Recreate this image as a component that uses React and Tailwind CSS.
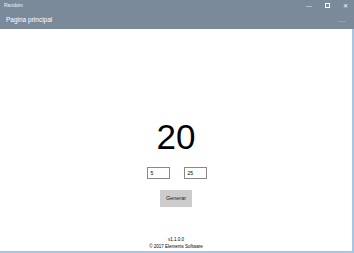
export default function App() {
  return (
    <div className="w-[354px] h-[253px] flex flex-col bg-white font-['Liberation_Sans',sans-serif] overflow-hidden">
      {/* barra de titulo */}
      <div className="bg-[#7b8a9b] text-white">
        <div className="h-[11px] flex items-center justify-between pl-[4px]">
          <span className="text-[5px] leading-none opacity-90">Random</span>
          <div className="flex items-center h-full text-[6px] leading-none">
            <span className="w-[18px] text-center">&#8212;</span>
            <span className="w-[18px] flex justify-center">
              <span className="w-[5px] h-[5px] border border-white" />
            </span>
            <span className="w-[18px] text-center">&#10005;</span>
          </div>
        </div>
        <div className="h-[18px] flex items-center justify-between pl-[6px] pr-[8px]">
          <span className="text-[6.5px] leading-none pt-[1px]">Pagina principal</span>
          <span className="text-[6px] leading-none tracking-[1px]">...</span>
        </div>
      </div>

      {/* contenido */}
      <div className="flex-1 flex flex-col items-center border-r-2 border-b-2 border-[#a8c6e4]">
        <div className="mt-[90px] text-[35px] leading-none text-black">20</div>
        <div className="mt-[13px] flex gap-[14px] pl-[1px]">
          <div className="w-[23px] h-[12px] border border-[#888] text-[5px] leading-none pl-[3px] flex items-center">5</div>
          <div className="w-[23px] h-[12px] border border-[#888] text-[5px] leading-none pl-[3px] flex items-center">25</div>
        </div>
        <button className="mt-[11px] w-[32px] h-[17px] bg-[#cccccc] text-[5.5px] leading-none text-[#222]">Generar</button>
        <div className="mt-auto mb-[1px] flex flex-col items-center text-[4.5px] leading-[7px] text-black">
          <span>v1.1.0.0</span>
          <span>© 2017 Elements Software</span>
        </div>
      </div>
    </div>
  );
}
